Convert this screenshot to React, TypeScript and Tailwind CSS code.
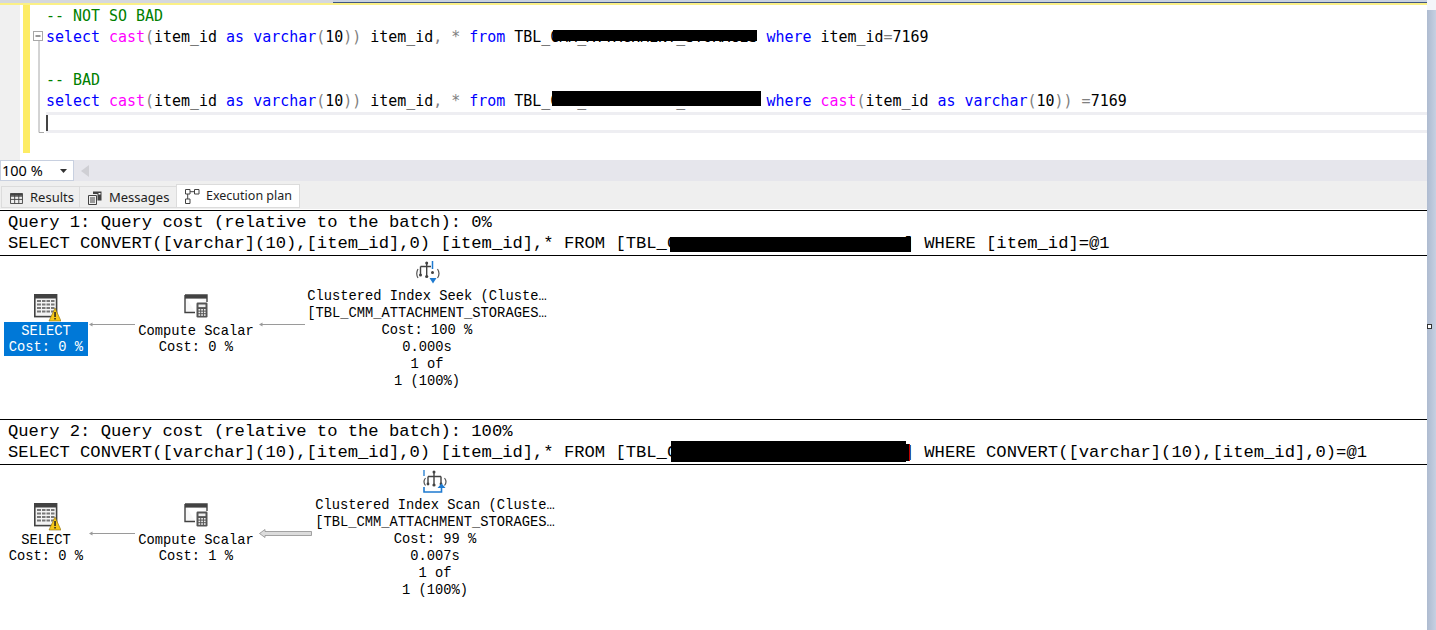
import React from "react";

const C = ({ children }: { children: React.ReactNode }) => <span className="text-[#008000]">{children}</span>;
const K = ({ children }: { children: React.ReactNode }) => <span className="text-[#0000ff]">{children}</span>;
const F = ({ children }: { children: React.ReactNode }) => <span className="text-[#ff00ff]">{children}</span>;
const G = ({ children }: { children: React.ReactNode }) => <span className="text-[#808080]">{children}</span>;

const CastExpr = () => (
  <>
    <F>cast</F>
    <G>(</G>item_id <K>as</K> <K>varchar</K>
    <G>(</G>10<G>))</G>
  </>
);

const Redact = ({ className }: { className: string }) => <span className={`absolute bg-black ${className}`} />;

const TableIcon = ({ className }: { className: string }) => (
  <svg viewBox="0 0 27 28" className={className}>
    <rect x="0.8" y="0.8" width="21.8" height="21.8" fill="#f4f4f4" stroke="#424242" strokeWidth="1.6" />
    <rect x="1" y="1" width="21" height="3.5" fill="#424242" />
    {[7, 10.5, 14, 17.5].map((y) => (
      <line key={y} x1="3" x2="20.5" y1={y} y2={y} stroke="#777" strokeWidth="2" />
    ))}
    {[7.5, 12, 16.5].map((x) => (
      <line key={x} x1={x} x2={x} y1="5" y2="20" stroke="#f4f4f4" strokeWidth="1" />
    ))}
    <path d="M21 14 L27 27 L15 27 Z" fill="#f6c717" stroke="#8a6d10" strokeWidth="0.6" />
    <rect x="20.3" y="18" width="1.5" height="5" fill="#222" />
    <rect x="20.3" y="24" width="1.5" height="1.5" fill="#222" />
  </svg>
);

const ComputeIcon = ({ className }: { className: string }) => (
  <svg viewBox="0 0 24 24" className={className}>
    <path d="M1 1 H23 V8 M1 1 V18.5 H11" fill="#f7f7f7" stroke="#424242" strokeWidth="1.4" />
    <rect x="1" y="1" width="22" height="3.6" fill="#424242" />
    <rect x="12.5" y="8.5" width="11" height="15" rx="1.2" fill="#555" />
    <rect x="14.5" y="10.5" width="7" height="2.6" fill="#eee" />
    {[15, 17.6, 20.2].map((y) =>
      [14.5, 17.2, 19.9].map((x) => <rect key={`${x}${y}`} x={x} y={y} width="1.7" height="1.6" fill="#eee" />)
    )}
  </svg>
);

const SeekIcon = ({ className }: { className: string }) => (
  <svg viewBox="0 0 24 23" className={className}>
    <path d="M10.7 1 V16 M4.5 5.5 H15 M4.5 5.5 V14 " fill="none" stroke="#424242" strokeWidth="1.4" />
    <circle cx="10.7" cy="2" r="1.5" fill="#424242" />
    <circle cx="10.7" cy="15.5" r="1.6" fill="#424242" />
    <circle cx="4.5" cy="14" r="1.5" fill="#424242" />
    <circle cx="16.5" cy="11.5" r="1.5" fill="#424242" />
    <path d="M2 8 C0.3 11 0.3 14 2 17 M21.5 8 C23.5 11 23.5 14 21.5 17" fill="none" stroke="#555" strokeWidth="1.2" />
    <path d="M16.5 0 V8" stroke="#1e7ad0" strokeWidth="1.5" />
    <path d="M13.5 17 H20.5 L17 22.5 Z" fill="#1e7ad0" />
  </svg>
);

const ScanIcon = ({ className }: { className: string }) => (
  <svg viewBox="0 0 24 23" className={className}>
    <path d="M1 0 V6" stroke="#1e7ad0" strokeWidth="1.3" />
    <path d="M11 1 V15 M5 6.5 H18 M5 6.5 V14 M18 6.5 V14" fill="none" stroke="#424242" strokeWidth="1.4" />
    <circle cx="11" cy="2" r="1.5" fill="#424242" />
    <circle cx="11" cy="15" r="1.6" fill="#424242" />
    <circle cx="5" cy="14" r="1.4" fill="#424242" />
    <circle cx="18" cy="14" r="1.4" fill="#424242" />
    <path d="M2.5 8 C0.5 10.5 0.5 13 2.5 15.5 M21.5 8 C23.5 10.5 23.5 13 21.5 15.5" fill="none" stroke="#555" strokeWidth="1.2" />
    <path d="M1 17 V22 H18.5 V17" fill="none" stroke="#1e7ad0" strokeWidth="1.6" />
    <path d="M14.5 18 L18.5 13.5 L22.5 18 Z" fill="#1e7ad0" />
  </svg>
);

const ThinArrow = ({ className }: { className: string }) => (
  <svg viewBox="0 0 46 5" className={className}>
    <path d="M0 2.5 L3.5 0.5 V2 H46 V3 H3.5 V4.5 Z" fill="#9a9a9a" />
  </svg>
);

const ThickArrow = ({ className }: { className: string }) => (
  <svg viewBox="0 0 53 9" className={className}>
    <path d="M0.5 4.5 L6 0.5 V2.5 H52.5 V6.5 H6 V8.5 Z" fill="#dcdcdc" stroke="#8e8e8e" strokeWidth="0.8" />
  </svg>
);

const NodeText = ({ lines, className }: { lines: string[]; className: string }) => (
  <div className={`absolute flex flex-col items-center whitespace-pre ${className}`}>
    {lines.map((l, i) => (
      <span key={i}>{l}</span>
    ))}
  </div>
);

const Tab = ({ icon, label, active, className }: { icon: React.ReactNode; label: string; active?: boolean; className: string }) => (
  <div
    className={`flex items-center border border-[#dcdcdc] ${
      active ? "-mt-[2px] h-[24px] gap-[6px] bg-white pl-[8px] text-[12.5px]" : "h-[22px] gap-[7px] bg-[#efefef] pl-[8px] pt-[2px] text-[13px]"
    } ${className}`}
  >
    {icon}
    <span className="text-[#1e1e1e]">{label}</span>
  </div>
);

const HeaderBlock = ({ title, sql }: { title: string; sql: React.ReactNode }) => (
  <div className="h-[45px] whitespace-pre border-t border-black pl-[8px] pt-[1px] text-[17.17px] leading-[21px] text-black">
    <div>{title}</div>
    <div className="relative">{sql}</div>
  </div>
);

export default function App() {
  return (
    <div className="relative flex h-[630px] w-[1436px] overflow-hidden bg-white">
      <div className="flex w-[1427px] flex-col">
        <div className="flex h-[3px]">
          <div className="w-[333px] bg-[#d5d8dd]" />
          <div className="flex-1 border-b border-[#3f5680] bg-[#c9d2e0]" />
        </div>
        <div className="h-[2px] bg-[#fbf086]" />

        <div className="flex h-[155px] font-['DejaVu_Sans_Mono',monospace] text-[14.96px] text-black">
          <div className="w-[20px] bg-[#f0f0f0]" />
          <div className="w-[3px]" />
          <div className="h-[148px] w-[7px] bg-[#fdec64]" />
          <svg viewBox="0 0 16 148" className="h-[148px] w-[16px]">
            <rect x="3.5" y="26.5" width="9" height="9" fill="#fff" stroke="#a8a8a8" />
            <line x1="5.5" x2="10.5" y1="31" y2="31" stroke="#333" />
            <path d="M9 36 V127.5 H14" fill="none" stroke="#a8a8a8" />
          </svg>
          <div className="flex-1 whitespace-pre leading-[23px]">
            <div className="h-[21.33px]">
              <C>-- NOT SO BAD</C>
            </div>
            <div className="relative h-[21.33px]">
              <K>select</K> <CastExpr /> item_id<G>,</G> <G>*</G> <K>from</K> TBL_CMM_ATTACHMENT_STORAGES <K>where</K> item_id<G>=</G>7169
              <Redact className="left-[507px] top-[4px] h-[11px] w-[204px]" />
            </div>
            <div className="h-[21.33px]" />
            <div className="h-[21.33px]">
              <C>-- BAD</C>
            </div>
            <div className="relative h-[21.33px]">
              <K>select</K> <CastExpr /> item_id<G>,</G> <G>*</G> <K>from</K> TBL_CMM_ATTACHMENT_STORAGES <K>where</K> <CastExpr /> <G>=</G>7169
              <Redact className="left-[506px] top-[1px] h-[15px] w-[209px]" />
            </div>
            <div className="h-[21.33px] border-y-[3px] border-[#eeeef2]">
              <div className="h-[16px] w-[2px] bg-[#444]" />
            </div>
          </div>
        </div>

        <div className="flex h-[21px] bg-[#e6e6ec]">
          <div className="flex w-[74px] items-center justify-between border border-[#c8d0e0] bg-white pl-[1px] pr-[6px] font-['Noto_Sans',sans-serif] text-[14.5px] text-black">
            <span>100 %</span>
            <svg viewBox="0 0 7 4" className="h-[4px] w-[7px]">
              <path d="M0 0 H7 L3.5 4 Z" fill="#333" />
            </svg>
          </div>
          <svg viewBox="0 0 8 12" className="ml-[7px] mt-[5px] h-[12px] w-[8px]">
            <path d="M8 0 V12 L0 6 Z" fill="#cfcfd4" />
          </svg>
        </div>

        <div className="flex h-[28px] items-end bg-[#efefef] pb-[1px] pl-[1px] font-['Noto_Sans',sans-serif]">
          <Tab
            className="w-[79px]"
            label="Results"
            icon={
              <svg viewBox="0 0 14 12" className="h-[11px] w-[13px]">
                <path d="M0.5 0.5 H13.5 V11.5 H0.5 Z M0.5 3.5 H13.5 M0.5 7 H13.5 M5 0.5 V11.5 M9.5 0.5 V11.5" fill="none" stroke="#424242" />
                <rect x="0.5" y="0.5" width="13" height="2.5" fill="#424242" />
              </svg>
            }
          />
          <Tab
            className="-ml-px w-[98px]"
            label="Messages"
            icon={
              <svg viewBox="0 0 14 14" className="h-[14px] w-[14px]">
                <path d="M0.5 4.5 H8.5 V13.5 H0.5 Z M2 7 H7 M2 9 H7 M2 11 H7" fill="none" stroke="#424242" />
                <path d="M5 0.5 H13.5 V9.5 H9.5 V3 H5 Z" fill="#424242" />
                <rect x="10.5" y="2" width="2" height="1.5" fill="#fff" />
              </svg>
            }
          />
          <Tab
            active
            className="-ml-px w-[124px]"
            label="Execution plan"
            icon={
              <svg viewBox="0 0 15 15" className="h-[15px] w-[15px]">
                <path d="M0.5 0.5 H5 V5 H0.5 Z M9.5 0.5 H14 V5 H9.5 Z M0.5 10 H5 V14.5 H0.5 Z" fill="#fff" stroke="#424242" />
                <path d="M5 2.7 H9.5 M2.7 5 V10" stroke="#424242" />
              </svg>
            }
          />
        </div>

        <div className="flex flex-1 flex-col font-['Liberation_Mono',monospace]">
          <div className="h-[1px]" />
          <HeaderBlock
            title="Query 1: Query cost (relative to the batch): 0%"
            sql={
              <>
                SELECT CONVERT([varchar](10),[item_id],0) [item_id],* FROM [TBL_CMM_ATTACHMENT_STORAGES] WHERE [item_id]=@1
                <Redact className="left-[662px] top-[4px] h-[15px] w-[241px]" />
              </>
            }
          />
          <div className="relative h-[164px] border-t border-black text-[13.75px] text-black">
            <TableIcon className="absolute left-[34px] top-[38px] h-[28px] w-[27px]" />
            <div className="absolute left-[4px] top-[66px] h-[34px] w-[84px] bg-[#0078d7]" />
            <NodeText className="left-[4px] top-[68px] w-[84px] leading-[16px] text-white" lines={["SELECT", "Cost: 0 %"]} />
            <ThinArrow className="absolute left-[89px] top-[66px] h-[5px] w-[46px]" />
            <ComputeIcon className="absolute left-[184px] top-[38px] h-[24px] w-[24px]" />
            <NodeText className="left-[96px] top-[68px] w-[200px] leading-[16px]" lines={["Compute Scalar", "Cost: 0 %"]} />
            <ThinArrow className="absolute left-[259px] top-[66px] h-[5px] w-[46px]" />
            <SeekIcon className="absolute left-[416px] top-[5px] h-[23px] w-[24px]" />
            <NodeText
              className="left-[300px] top-[32px] w-[254px] leading-[17px]"
              lines={["Clustered Index Seek (Cluste…", "[TBL_CMM_ATTACHMENT_STORAGES…", "Cost: 100 %", "0.000s", "1 of", "1 (100%)"]}
            />
          </div>
          <HeaderBlock
            title="Query 2: Query cost (relative to the batch): 100%"
            sql={
              <>
                SELECT CONVERT([varchar](10),[item_id],0) [item_id],* FROM [TBL_CMM_ATTACHMENT_STORAGES] WHERE CONVERT([varchar](10),[item_id],0)=@1
                <Redact className="left-[663px] top-[-1px] h-[21px] w-[235px]" />
                <span className="absolute left-[898px] top-[2px] h-[17px] w-[4px] border-r border-[#c00000] bg-black" />
              </>
            }
          />
          <div className="relative flex-1 border-t border-black text-[13.75px] text-black">
            <TableIcon className="absolute left-[34px] top-[38px] h-[28px] w-[27px]" />
            <NodeText className="left-[4px] top-[68px] w-[84px] leading-[16px]" lines={["SELECT", "Cost: 0 %"]} />
            <ThinArrow className="absolute left-[89px] top-[66px] h-[5px] w-[46px]" />
            <ComputeIcon className="absolute left-[184px] top-[38px] h-[24px] w-[24px]" />
            <NodeText className="left-[96px] top-[68px] w-[200px] leading-[16px]" lines={["Compute Scalar", "Cost: 1 %"]} />
            <ThickArrow className="absolute left-[259px] top-[64px] h-[9px] w-[53px]" />
            <ScanIcon className="absolute left-[423px] top-[5px] h-[23px] w-[24px]" />
            <NodeText
              className="left-[308px] top-[32px] w-[254px] leading-[17px]"
              lines={["Clustered Index Scan (Cluste…", "[TBL_CMM_ATTACHMENT_STORAGES…", "Cost: 99 %", "0.007s", "1 of", "1 (100%)"]}
            />
          </div>
        </div>
      </div>

      <div className="flex w-[9px] flex-col">
        <div className="h-[10px] bg-[#f4f6fa]" />
        <div className="flex-1 bg-gradient-to-r from-[#aebbd0] to-[#c6d0e2]" />
      </div>
      <div className="absolute left-[1427px] top-[324px] h-[5px] w-[5px] border border-[#333] bg-white" />
    </div>
  );
}
